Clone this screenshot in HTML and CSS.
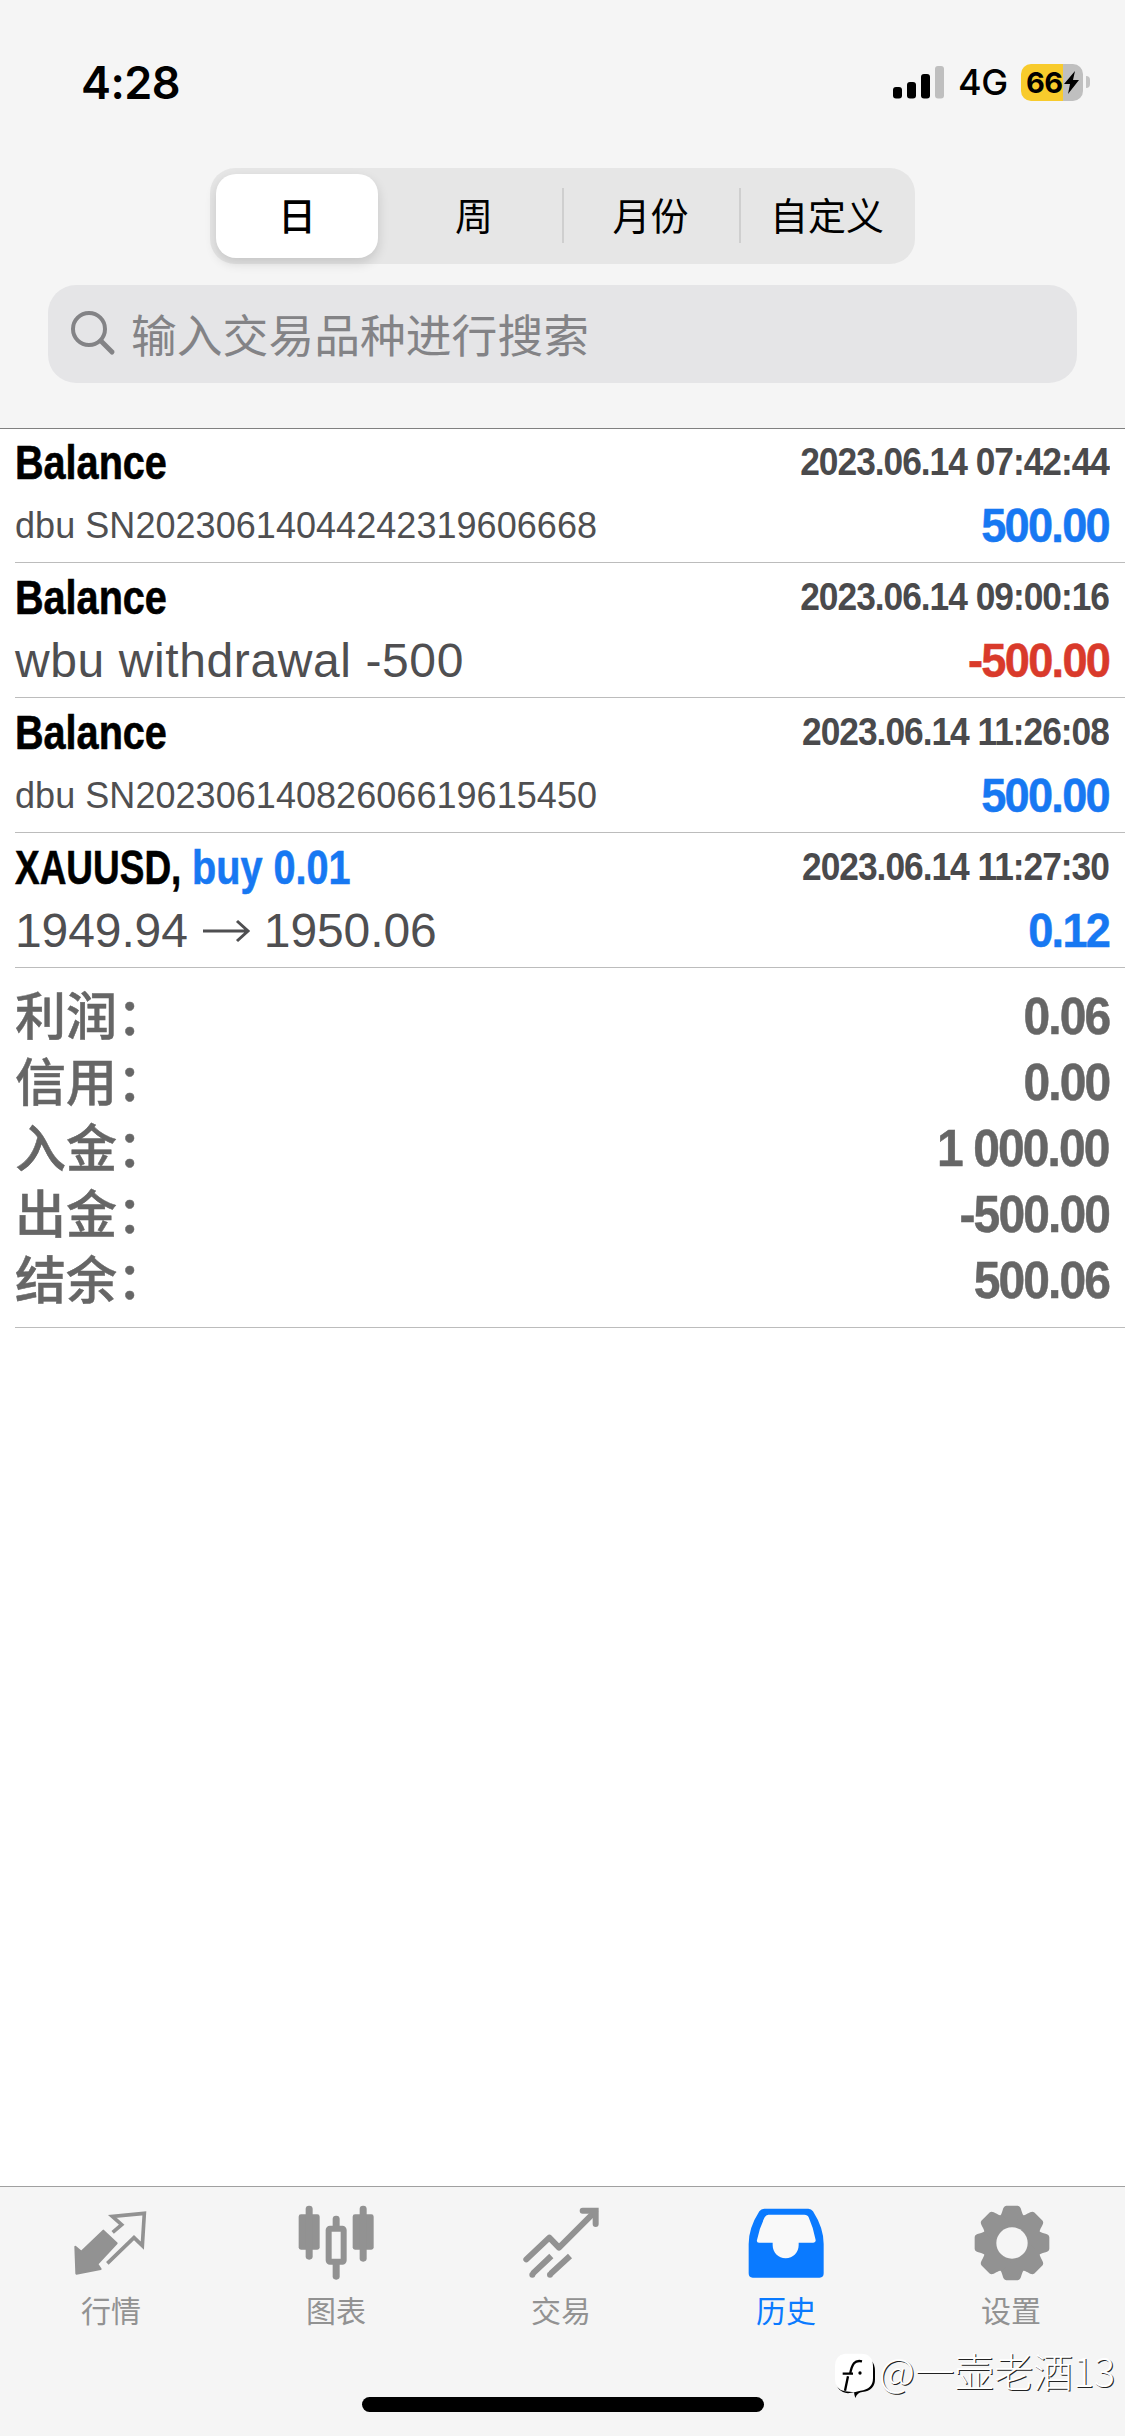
FILE: index.html
```html
<!DOCTYPE html>
<html lang="zh-CN">
<head>
<meta charset="utf-8">
<title>历史</title>
<link rel="stylesheet" href="styles.css">
</head>
<body>
<div class="screen">
  <header class="header">
    <div class="status">
      <span class="clock">4:28</span>
      <div class="status-right">
        <svg class="signal" viewBox="0 0 51 33"><rect x="0" y="21" width="9" height="11.500" rx="3"/><rect x="14" y="16" width="9" height="16.500" rx="3"/><rect x="28" y="8" width="9" height="24.500" rx="3"/><rect x="42" y="0" width="9" height="32.500" rx="3" fill="#bfbfbf"/></svg>
        <span class="network">4G</span>
        <div class="battery"><span class="battery-level">66</span><svg class="bolt" viewBox="0 0 15 23"><path d="M11 0 0 13h6L4 23 15 9H9z"/></svg></div>
        <span class="battery-tip"></span>
      </div>
    </div>
    <div class="segments">
      <span class="segment selected">日</span>
      <span class="segment">周</span>
      <span class="segment divided">月份</span>
      <span class="segment divided">自定义</span>
    </div>
    <div class="search">
      <svg class="search-icon" viewBox="0 0 46 46"><circle cx="18" cy="18" r="16"/><path d="m30 30 11 11" stroke-width="5"/></svg>
      <span>输入交易品种进行搜索</span>
    </div>
  </header>
  <main class="content">
    <div class="deal">
      <div class="deal-top"><span class="title name">Balance</span><span class="date">2023.06.14 07:42:44</span></div>
      <div class="deal-bottom"><span class="note small">dbu SN20230614044242319606668</span><span class="amount plus">500.00</span></div>
    </div>
    <div class="deal">
      <div class="deal-top"><span class="title name">Balance</span><span class="date">2023.06.14 09:00:16</span></div>
      <div class="deal-bottom"><span class="note wide">wbu withdrawal -500</span><span class="amount minus">-500.00</span></div>
    </div>
    <div class="deal">
      <div class="deal-top"><span class="title name">Balance</span><span class="date">2023.06.14 11:26:08</span></div>
      <div class="deal-bottom"><span class="note small">dbu SN20230614082606619615450</span><span class="amount plus">500.00</span></div>
    </div>
    <div class="deal">
      <div class="deal-top"><span class="pair"><span class="title symbol">XAUUSD,</span><span class="title side">buy 0.01</span></span><span class="date">2023.06.14 11:27:30</span></div>
      <div class="deal-bottom"><span class="note prices">1949.94<svg class="arrow" viewBox="0 0 46 24"><path d="M0 12h44M34 2l11 10-11 10"/></svg>1950.06</span><span class="amount plus">0.12</span></div>
    </div>
    <div class="summary">
      <div class="total"><span class="label">利润：</span><span class="value">0.06</span></div>
      <div class="total"><span class="label">信用：</span><span class="value">0.00</span></div>
      <div class="total"><span class="label">入金：</span><span class="value">1 000.00</span></div>
      <div class="total"><span class="label">出金：</span><span class="value">-500.00</span></div>
      <div class="total"><span class="label">结余：</span><span class="value">500.06</span></div>
    </div>
  </main>
  <nav class="tabs">
    <div class="tab">
      <svg class="tab-icon" viewBox="107 106 228 228"><path fill="currentColor" stroke="currentColor" stroke-width="6" stroke-linejoin="round" d="M108 231 126 246 192 183 232 221 174 283 184 298 111 312z"/><path fill="none" stroke="currentColor" stroke-width="11" d="M220 188 247 165 219 140 315 131 309 228 284 204 204 281"/></svg>
      <span>行情</span>
    </div>
    <div class="tab">
      <svg class="tab-icon" viewBox="781 106 228 228"><g fill="currentColor"><rect x="777" y="134" width="63" height="106" rx="7"/><rect x="798" y="108" width="21" height="162" rx="10"/><rect x="939" y="134" width="63" height="106" rx="7"/><rect x="960" y="108" width="21" height="168" rx="10"/><rect x="879" y="138" width="21" height="40" rx="10"/><rect x="879" y="270" width="21" height="60" rx="10"/></g><rect x="867" y="177" width="45" height="99" rx="4" fill="none" stroke="currentColor" stroke-width="18"/></svg>
      <span>图表</span>
    </div>
    <div class="tab">
      <svg class="tab-icon" viewBox="136 106 228 228"><g fill="none" stroke="currentColor" stroke-width="18"><path stroke-linecap="round" stroke-linejoin="round" d="m140 269 69-65 29 30 108-108"/><path stroke-linecap="round" d="M309 123h39v40"/><path d="m159 312 56-53M213 312l58-53"/></g><g fill="currentColor"><circle cx="158" cy="315" r="9"/><circle cx="211" cy="315" r="9"/></g></svg>
      <span>交易</span>
    </div>
    <div class="tab active">
      <svg class="tab-icon" viewBox="811 106 228 228"><path fill="currentColor" d="M854 117h132q9 0 14 8 32 50 32 98v88q0 13-12 13H819q-12 0-12-13v-88q0-48 32-98 6-8 15-8z"/><path class="tray" d="M866 135h108q10 0 13 8 14 31 21 68 1 8-7 8h-44v8c0 21-17 39-39 39s-39-18-39-39v-8h-41q-8 0-6-8 7-36 23-68 4-8 11-8z"/></svg>
      <span>历史</span>
    </div>
    <div class="tab">
      <svg class="tab-icon" viewBox="-111 -114 228 228"><g fill="currentColor"><circle r="88"/><path id="tooth" d="M-38-79C-27-86-30-112-17-112H17C30-112 27-86 38-79V0h-76z"/><use href="#tooth" transform="rotate(45)"/><use href="#tooth" transform="rotate(90)"/><use href="#tooth" transform="rotate(135)"/><use href="#tooth" transform="rotate(180)"/><use href="#tooth" transform="rotate(225)"/><use href="#tooth" transform="rotate(270)"/><use href="#tooth" transform="rotate(315)"/></g><circle r="47" fill="#f5f5f5"/></svg>
      <span>设置</span>
    </div>
  </nav>
  <div class="home-indicator"></div>
  <div class="watermark">
    <svg class="mark" viewBox="0 0 120 135"><path fill="#000" d="M35 14h48q40 0 40 40v25q0 34-38 38-15 1-21 18-3-8-4-17l-18 3Q7 116 7 84V45q0-31 28-31z"/><path fill="#fff" d="M33 2h48q36 0 36 38v35q0 34-38 38l-18 5-28-3Q3 110 3 78V38Q3 6 33 2z"/><path fill="none" stroke="#000" stroke-width="7" d="M84 25C62 20 54 32 48 64M26 62h31M42 70 33 113"/><circle cx="78" cy="60" r="5"/></svg>
    <span>@一壶老酒13</span>
  </div>
</div>
</body>
</html>
```
FILE: styles.css
```css
* { box-sizing: border-box; }
body { margin: 0; background: #fff; }
svg { display: block; flex: none; overflow: visible; }
.screen {
  position: relative;
  display: flex;
  flex-direction: column;
  width: 1125px;
  height: 2436px;
  overflow: hidden;
  font-family: "Liberation Sans", "Noto Sans CJK SC", sans-serif;
  background: #fff;
}
.header {
  flex: none;
  height: 429px;
  background: #f5f5f5;
  border-bottom: 1px solid #808080;
}
.status {
  display: flex;
  justify-content: space-between;
  align-items: center;
  height: 168px;
  padding: 0 35px 4px 81px;
  font-family: Inter, sans-serif;
}
.clock { font-size: 45px; font-weight: 600; letter-spacing: -0.5px; }
.status-right { display: flex; align-items: center; }
.signal { width: 51px; height: 33px; }
.network { margin-left: 14px; width: 49px; font-size: 36px; font-weight: 500; white-space: nowrap; letter-spacing: -0.5px; }
.battery {
  display: flex;
  align-items: center;
  width: 62px;
  height: 37px;
  margin-left: 14px;
  padding-left: 5px;
  border-radius: 10px;
  background: linear-gradient(90deg, #f8cb2c 42px, #bfbfbf 42px);
}
.battery-level { width: 37px; font-size: 29px; font-weight: 700; letter-spacing: -0.5px; }
.bolt { width: 15px; height: 23px; margin-left: 1px; }
.battery-tip { width: 4px; height: 12px; margin-left: 3px; border-radius: 0 4px 4px 0; background: #c4c4c4; }
.segments {
  display: grid;
  grid-template-columns: 176px 176px 177px 176px;
  width: 705px;
  height: 96px;
  margin: 0 auto;
  border-radius: 25px;
  background: #e6e6e6;
  font-family: "Noto Sans CJK SC", sans-serif;
  font-size: 38px;
}
.segment { display: flex; align-items: center; justify-content: center; padding-bottom: 5px; }
.selected {
  margin: 6px 8px 6px 6px;
  border-radius: 20px;
  background: #fff;
  font-weight: 500;
  box-shadow: 0 5px 12px rgba(0, 0, 0, 0.14);
}
.divided { background: linear-gradient(#cfcfcf, #cfcfcf) 0 20px / 2px 55px no-repeat; }
.search {
  display: flex;
  align-items: center;
  width: 1029px;
  height: 98px;
  margin: 21px auto 0;
  padding-left: 23px;
  border-radius: 28px;
  background: #e5e5e7;
  color: #838386;
  font-family: "Noto Sans CJK SC", sans-serif;
  font-size: 45.800px;
}
.search span { margin-left: 14px; padding-bottom: 3px; }
.search-icon { width: 46px; height: 46px; fill: none; stroke: #838386; stroke-width: 4; stroke-linecap: round; }
.content { flex: 1; padding-left: 15px; }
.deal { height: 135px; padding: 1px 16px 0 0; border-bottom: 1px solid #bcbcbc; }
.deal:first-child { height: 134px; padding-top: 0; }
.deal-top, .deal-bottom { display: flex; justify-content: space-between; align-items: center; white-space: nowrap; }
.deal-top { height: 66px; }
.deal-bottom { height: 61px; }
.title { font-size: 48px; font-weight: 700; transform-origin: left center; -webkit-text-stroke: 0.6px currentColor; }
.name { transform: scaleX(0.825); }
.pair { display: flex; }
.symbol { width: 177px; transform: scaleX(0.77); }
.side { color: #1778f2; transform: scaleX(0.825); }
.date { font-size: 38px; font-weight: 700; letter-spacing: -1.100px; color: #4a4a4c; transform: scaleX(0.93); transform-origin: right center; }
.note { font-size: 48px; color: #4f4f51; }
.small { font-size: 36px; letter-spacing: 0.050px; }
.wide { letter-spacing: 0.600px; }
.prices { display: flex; align-items: center; letter-spacing: -0.100px; }
.arrow { width: 46px; height: 24px; margin: 0 15px; fill: none; stroke: currentColor; stroke-width: 3; }
.amount { font-size: 48px; font-weight: 700; letter-spacing: -1.800px; transform: scaleX(0.94); transform-origin: right center; -webkit-text-stroke: 0.5px currentColor; }
.plus { color: #1778f2; }
.minus { color: #d93a2b; }
.summary { height: 360px; padding: 15px 16px 0 0; border-bottom: 1px solid #bcbcbc; color: #666; }
.total { display: flex; justify-content: space-between; align-items: center; height: 66px; white-space: nowrap; }
.label { padding-bottom: 5px; font-family: "Noto Sans CJK SC", sans-serif; font-size: 51px; font-weight: 500; line-height: 61px; -webkit-text-stroke: 0.5px currentColor; }
.value { font-size: 51px; font-weight: 700; letter-spacing: -2px; transform: scaleX(0.94); transform-origin: right center; -webkit-text-stroke: 0.5px currentColor; }
.tabs {
  display: grid;
  grid-template-columns: repeat(5, 1fr);
  flex: none;
  height: 250px;
  padding-top: 18px;
  border-top: 1px solid #a0a0a0;
  background: #f5f5f5;
  color: #929292;
}
.tab { display: flex; flex-direction: column; align-items: center; font-family: "Noto Sans CJK SC", sans-serif; font-size: 30px; line-height: 44px; }
.tab-icon { width: 76px; height: 76px; margin-bottom: 6px; }
.tab > span { margin-right: 3px; }
.active { color: #0a7aff; }
.tray { fill: #f9f9f9; }
.home-indicator { position: absolute; left: 362px; bottom: 24px; width: 402px; height: 15px; border-radius: 8px; background: #000; }
.watermark {
  position: absolute;
  left: 834px;
  top: 2339px;
  display: flex;
  align-items: center;
  height: 60px;
  color: #fff;
  font-family: "Noto Sans CJK SC", sans-serif;
  font-size: 39.500px;
  font-weight: 300;
  white-space: nowrap;
  text-shadow: 1px 1px 0 #222;
}
.mark { width: 40px; height: 45px; margin-right: 5px; margin-top: 12px; }
```
